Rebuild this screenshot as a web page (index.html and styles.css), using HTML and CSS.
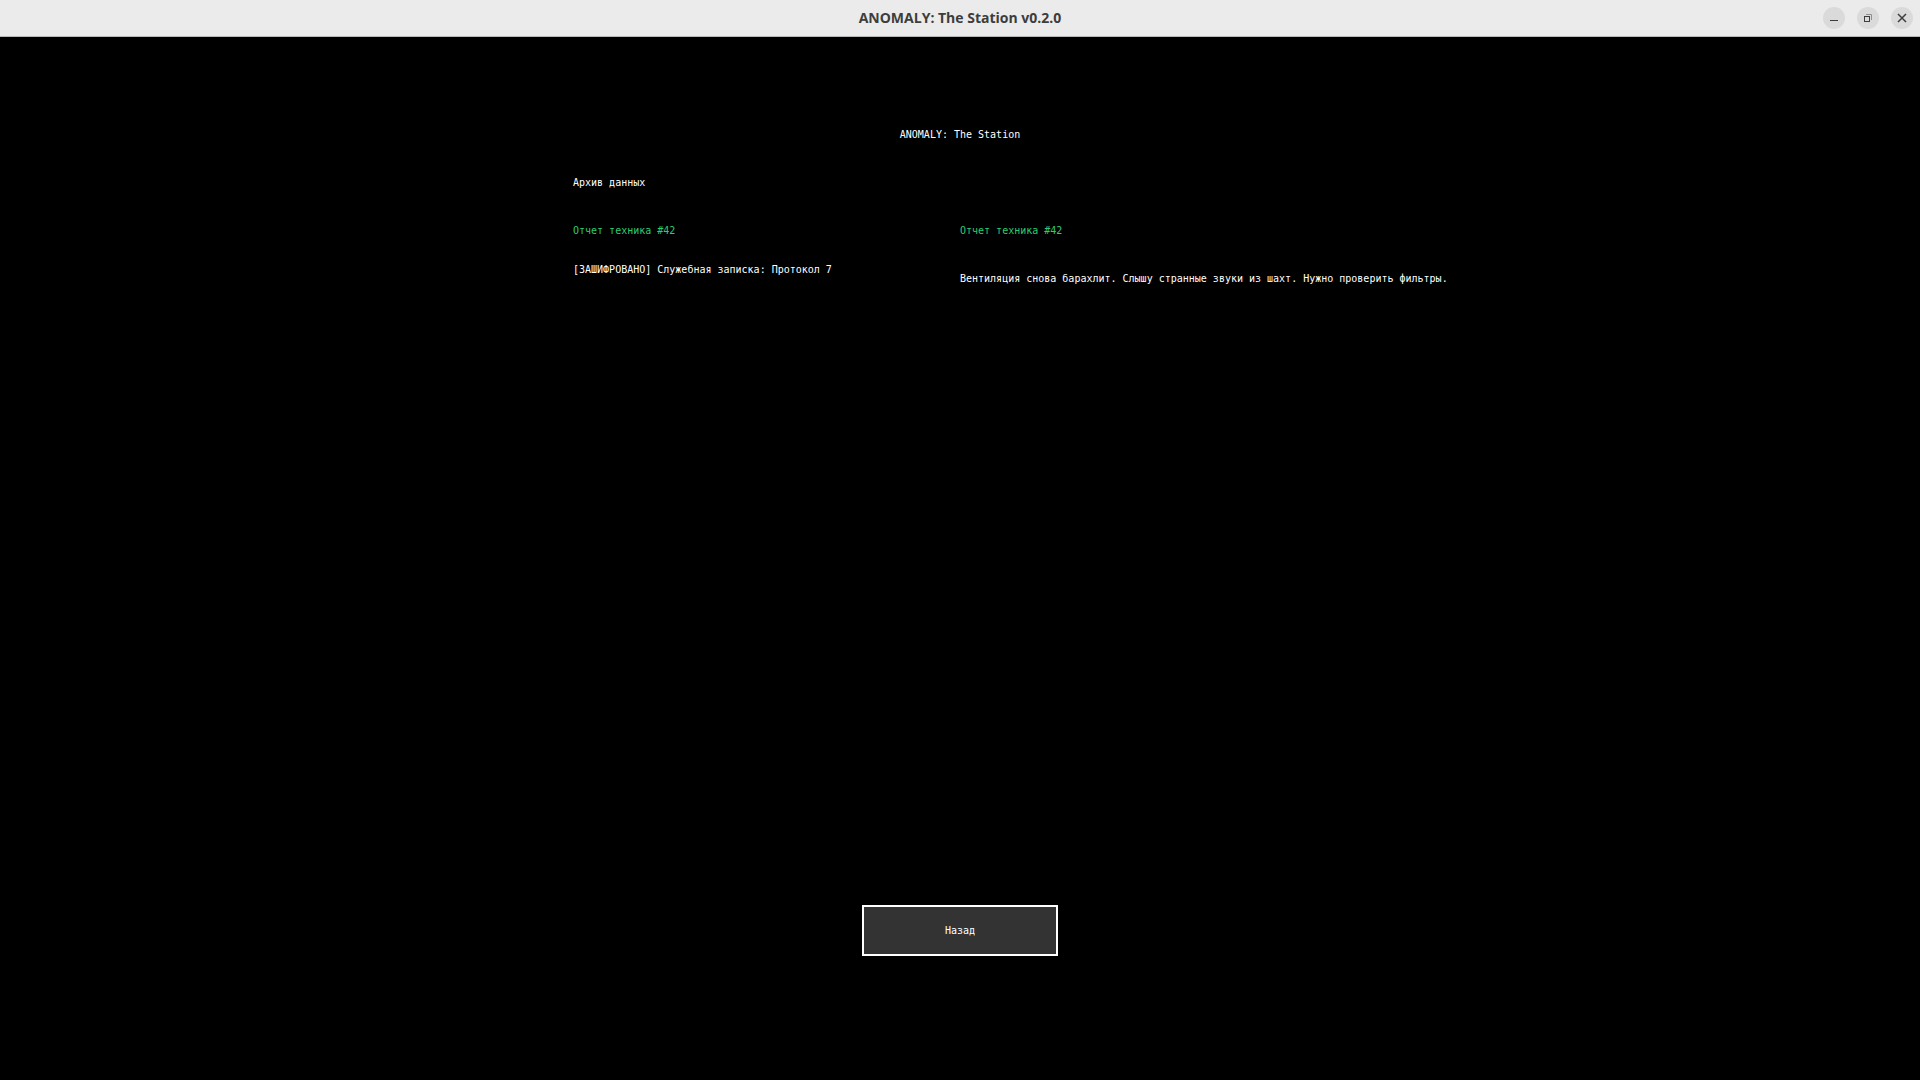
FILE: index.html
```html
<!DOCTYPE html>
<html lang="ru">
<head>
  <meta charset="utf-8">
  <title>ANOMALY: The Station v0.2.0</title>
  <link rel="stylesheet" href="styles.css">
</head>
<body>
  <header class="titlebar">
    <div class="window-title">ANOMALY: The Station v0.2.0</div>
    <div class="window-controls">
      <button class="window-btn" aria-label="Minimize">
        <svg width="22" height="22" viewBox="0 0 22 22"><path d="M7 13.5h8" stroke="#3d3d3d" fill="none"/></svg>
      </button>
      <button class="window-btn" aria-label="Restore">
        <svg width="22" height="22" viewBox="0 0 22 22" fill="none">
          <path d="M9 7.5h5.5V13" stroke="#909090"/>
          <rect x="7.5" y="9.5" width="5" height="5" stroke="#3d3d3d"/>
        </svg>
      </button>
      <button class="window-btn" aria-label="Close">
        <svg width="22" height="22" viewBox="0 0 22 22"><path d="M7 7l8 8M15 7l-8 8" stroke="#3d3d3d" stroke-width="1.5" fill="none"/></svg>
      </button>
    </div>
  </header>

  <main class="screen">
    <h1 class="game-title">ANOMALY: The Station</h1>

    <section class="archive">
      <h2 class="archive-title">Архив данных</h2>
      <ul class="log-list">
        <li><a href="#log" class="log-link active">Отчет техника #42</a></li>
        <li><a href="#log" class="log-link">[ЗАШИФРОВАНО] Служебная записка: Протокол 7</a></li>
      </ul>
      <article class="log" id="log">
        <h3 class="log-title">Отчет техника #42</h3>
        <p class="log-text">Вентиляция снова барахлит. Слышу странные звуки из шахт. Нужно проверить фильтры.</p>
      </article>
    </section>

    <button class="back-btn">Назад</button>
  </main>
</body>
</html>
```

FILE: styles.css
```css
* {
  box-sizing: border-box;
}

body {
  margin: 0;
  min-height: 100vh;
  display: flex;
  flex-direction: column;
  background-color: #000;
  color: #fff;
  font-family: "DejaVu Sans Mono", monospace;
  font-size: 10px;
  line-height: 20px;
}

h1, h2, h3, p, ul {
  margin: 0;
  padding: 0;
  font-size: inherit;
  font-weight: normal;
}

.titlebar {
  display: grid;
  grid-template-columns: 1fr auto 1fr;
  align-items: center;
  height: 37px;
  padding: 0 7px;
  background-color: #ebebeb;
  border-bottom: 1px solid #b8b8b8;
  color: #3d3d3d;
}

.window-title {
  grid-column: 2;
  font-family: "Open Sans", "Noto Sans", sans-serif;
  font-size: 14px;
  font-weight: 700;
}

.window-controls {
  display: flex;
  justify-content: flex-end;
  gap: 12px;
}

.window-btn {
  width: 22px;
  height: 22px;
  padding: 0;
  border: none;
  border-radius: 50%;
  background-color: #dadada;
}

.window-btn svg {
  display: block;
}

.screen {
  flex: 1;
  display: flex;
  flex-direction: column;
  align-items: center;
  padding: 88px 20px 124px;
}

.game-title {
  margin-bottom: 28px;
}

.archive {
  display: grid;
  grid-template-columns: minmax(0, 1fr) minmax(0, 1fr);
  width: 100%;
  max-width: 774px;
  white-space: nowrap;
}

.archive-title {
  grid-column: 1 / 3;
  margin-bottom: 28px;
}

.log-list {
  display: flex;
  flex-direction: column;
  gap: 19px;
  list-style: none;
}

.log-link {
  color: #fff;
  text-decoration: none;
}

.log-link.active,
.log-title {
  color: #2ecc71;
}

.log-title {
  margin-bottom: 28px;
}

.back-btn {
  width: 196px;
  height: 51px;
  margin-top: auto;
  border: 2px solid #fff;
  background-color: #333;
  color: #fff;
  font: inherit;
  cursor: pointer;
}
```
